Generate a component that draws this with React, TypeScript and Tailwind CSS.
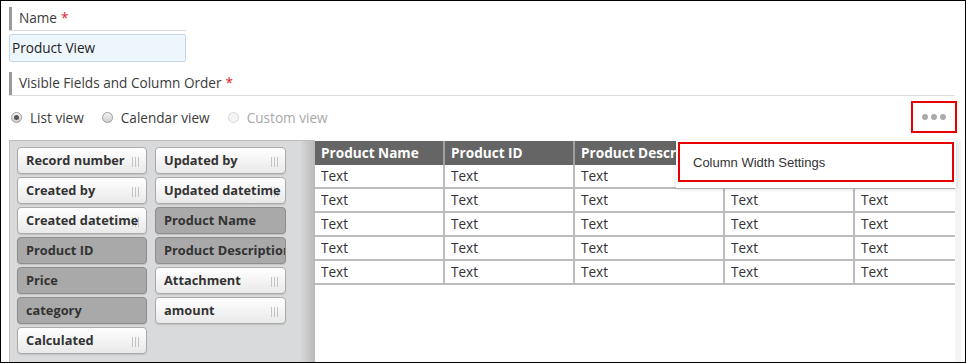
import React from 'react'

const fields = [
  { name: 'Record number', used: false },
  { name: 'Updated by', used: false },
  { name: 'Created by', used: false },
  { name: 'Updated datetime', used: false },
  { name: 'Created datetime', used: false },
  { name: 'Product Name', used: true },
  { name: 'Product ID', used: true },
  { name: 'Product Description', used: true },
  { name: 'Price', used: true },
  { name: 'Attachment', used: false },
  { name: 'category', used: true },
  { name: 'amount', used: false },
  { name: 'Calculated', used: false },
]

const columns = [
  { name: 'Product Name', w: 'w-[130px]' },
  { name: 'Product ID', w: 'w-[130px]' },
  { name: 'Product Description', w: 'w-[150px]' },
  { name: 'Category', w: 'w-[130px]' },
  { name: 'Price', w: 'w-[100px]' },
]

function Label({ text, wide }: { text: string; wide?: boolean }) {
  return (
    <div
      className={`flex h-[24px] items-center border-b border-[#dcdcdc] ${wide ? 'w-full' : 'w-[177px]'}`}
    >
      <div className="flex h-full items-center border-l-[3px] border-[#9a9a9a] pl-[7px] text-[13.6px] text-[#3b3b3b]">
        {text}
        <span className="ml-[4px] text-[#e0211b]">*</span>
      </div>
    </div>
  )
}

function Radio({ label, checked, disabled }: { label: string; checked?: boolean; disabled?: boolean }) {
  return (
    <label className="mr-[18px] flex items-center">
      <span
        className={`flex h-[11px] w-[11px] items-center justify-center rounded-full border ${
          disabled ? 'border-[#d8d8d8] bg-[#f4f4f4]' : 'border-[#9c9c9c] bg-gradient-to-b from-[#f3f3f3] to-[#cfcfcf]'
        }`}
      >
        {checked && <span className="h-[5px] w-[5px] rounded-full bg-[#555]" />}
      </span>
      <span className={`ml-[8px] text-[13.6px] ${disabled ? 'text-[#a8a8a8]' : 'text-[#3b3b3b]'}`}>{label}</span>
    </label>
  )
}

function Grip() {
  return (
    <span className="absolute right-[7px] top-[9px] flex gap-[2px]">
      <span className="h-[10px] w-px bg-[#c4c4c4]" />
      <span className="h-[10px] w-px bg-[#c4c4c4]" />
      <span className="h-[10px] w-px bg-[#c4c4c4]" />
    </span>
  )
}

function Chip({ name, used }: { name: string; used: boolean }) {
  return (
    <div
      className={`relative h-[27px] overflow-hidden rounded-[4px] border shadow-[0_1px_1px_rgba(0,0,0,0.12)] ${
        used
          ? 'border-[#8e8e8e] bg-[#a9a9a9]'
          : 'border-[#ababab] bg-gradient-to-b from-white to-[#e9e9e9]'
      }`}
    >
      {!used && <Grip />}
      <div className="relative flex h-full items-center whitespace-nowrap pl-[8px] text-[12.8px] font-bold text-[#333]">
        {name}
      </div>
    </div>
  )
}

export default function App() {
  return (
    <div className="relative h-[363px] w-[966px] overflow-hidden border border-black bg-white font-['Open_Sans',sans-serif]">
      <div className="flex h-full flex-col pl-[8px] pr-[10px] pt-[6px]">
        <Label text="Name" />
        <div className="mt-[3px] flex h-[28px] w-[177px] items-center rounded-[2px] border border-[#c6d6e3] bg-[#eef6fd] pl-[2px] text-[13.6px] text-[#222]">
          Product View
        </div>
        <div className="mt-[10px]">
          <Label text="Visible Fields and Column Order" wide />
        </div>
        <div className="flex h-[44px] items-center justify-between pl-[2px]">
          <div className="flex items-center">
            <Radio label="List view" checked />
            <Radio label="Calendar view" />
            <Radio label="Custom view" disabled />
          </div>
          <div className="-mr-[2px] mb-[3px] flex h-[32px] w-[46px] items-center justify-center gap-[3px] border-2 border-[#e60000]">
            <span className="h-[6px] w-[6px] rounded-full bg-[#ababab]" />
            <span className="h-[6px] w-[6px] rounded-full bg-[#ababab]" />
            <span className="h-[6px] w-[6px] rounded-full bg-[#ababab]" />
          </div>
        </div>
        <div className="-mr-[6px] flex flex-1">
          <div className="w-[306px] shrink-0 border-l border-t border-[#bdbdbd] bg-gradient-to-r from-[#d9dadb] from-[95%] to-[#b9b9b9] pl-[7px] pt-[6px]">
            <div className="grid grid-cols-[130px_131px] gap-x-[8px] gap-y-[3px]">
              {fields.map(f => (
                <Chip key={f.name} name={f.name} used={f.used} />
              ))}
            </div>
          </div>
          <div className="flex-1 border-r-[6px] border-[#f4f4f4] bg-white pt-px text-[13.6px]">
            <div className="flex h-[24px] bg-[#656565]">
              {columns.map((c, i) => (
                <div
                  key={c.name}
                  className={`${c.w} flex shrink-0 items-center overflow-hidden whitespace-nowrap pl-[6px] font-bold text-white ${
                    i < columns.length - 1 ? 'border-r-2 border-[#a0a0a0]' : ''
                  }`}
                >
                  {c.name}
                </div>
              ))}
            </div>
            {[0, 1, 2, 3, 4].map(r => (
              <div key={r} className="flex h-[24px]">
                {columns.map((c, i) => (
                  <div
                    key={c.name}
                    className={`${c.w} flex shrink-0 items-center border-b-2 border-[#bcbcbc] pl-[6px] text-[#333] ${
                      i < columns.length - 1 ? 'border-r-2' : ''
                    }`}
                  >
                    Text
                  </div>
                ))}
              </div>
            ))}
          </div>
        </div>
      </div>

      <div className="absolute left-[675px] top-[139px] h-[48px] w-[280px] bg-white p-[2px] shadow-[0_1px_4px_rgba(0,0,0,0.15)]">
        <div className="flex h-[40px] items-center border-2 border-[#e60000] pl-[13px] pt-px font-['Liberation_Sans',sans-serif] text-[13px] text-[#333]">
          Column Width Settings
        </div>
      </div>
    </div>
  )
}
